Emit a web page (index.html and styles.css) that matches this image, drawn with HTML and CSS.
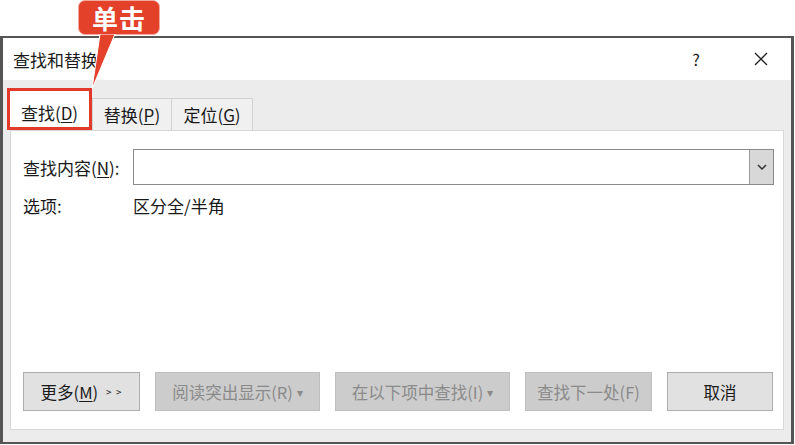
FILE: index.html
```html
<!DOCTYPE html>
<html lang="zh-CN">

<head>
    <meta charset="UTF-8">
    <title>查找和替换</title>
    <link rel="stylesheet" href="styles.css">
</head>

<body>
    <div class="dialog">
        <div class="titlebar">
            <span class="title">查找和替换</span>
            <span class="help">?</span>
            <span class="close">
                <svg width="16" height="16" viewBox="0 0 16 16">
                    <path d="M2 2 L14 14 M14 2 L2 14" stroke="#222" stroke-width="1.3" fill="none"/>
                </svg>
            </span>
        </div>

        <div class="body">
            <div class="tabs">
                <div class="tab active">查找(<u>D</u>)</div>
                <div class="tab">替换(<u>P</u>)</div>
                <div class="tab">定位(<u>G</u>)</div>
            </div>

            <div class="panel">
                <div class="row">
                    <label class="label">查找内容(<u>N</u>):</label>
                    <div class="combo">
                        <div class="combo-input"></div>
                        <div class="combo-btn">
                            <svg width="10" height="6" viewBox="0 0 10 6">
                                <path d="M1 1 L5 5 L9 1" stroke="#333" stroke-width="1.5" fill="none"/>
                            </svg>
                        </div>
                    </div>
                </div>

                <div class="row options">
                    <span class="label">选项:</span>
                    <span>区分全/半角</span>
                </div>

                <div class="buttons">
                    <div class="btn more">更多(<u>M</u>) <span class="arrows">&gt; &gt;</span></div>
                    <div class="btn disabled read">阅读突出显示(R) <span class="caret">▾</span></div>
                    <div class="btn disabled within">在以下项中查找(I) <span class="caret">▾</span></div>
                    <div class="btn disabled next">查找下一处(F)</div>
                    <div class="btn cancel">取消</div>
                </div>
            </div>
        </div>
    </div>

    <!-- annotation -->
    <div class="callout">单击</div>
    <svg class="pointer" width="40" height="70" viewBox="0 0 40 70">
        <path d="M20 0 L35 0 L12 55 Z" fill="#e4412b" stroke="#fff" stroke-width="1"/>
    </svg>
</body>

</html>
```

FILE: styles.css
```css
body {
    margin: 0;
    padding: 0;
    background-color: #fff;
    font-family: "Noto Sans CJK SC", "Liberation Sans", sans-serif;
    font-size: 17px;
    color: #1a1a1a;
    position: relative;
    width: 795px;
    height: 445px;
    overflow: hidden;
}

u {
    text-decoration: underline;
    text-underline-offset: 2px;
}

.dialog {
    margin: 36px 1px 0 0;
    height: 404px;
    border: 2px solid #555;
    border-left-width: 3px;
    border-right-width: 3px;
    display: flex;
    flex-direction: column;
}

.titlebar {
    height: 42px;
    background-color: #fff;
    display: flex;
    align-items: center;
    padding-left: 10px;
}

.title {
    flex: 1;
}

.help {
    width: 20px;
    text-align: center;
    font-size: 16px;
    margin-right: 45px;
}

.close {
    width: 20px;
    height: 16px;
    margin-right: 20px;
    display: flex;
    justify-content: center;
}

.body {
    flex: 1;
    background-color: #ececec;
    display: flex;
    flex-direction: column;
    padding: 0 7px 12px 5px;
}

.tabs {
    display: flex;
    align-items: flex-end;
    height: 50px;
}

.tab {
    height: 32px;
    box-sizing: border-box;
    border: 1px solid #d2d2d2;
    border-bottom: none;
    background-color: #f0f0f0;
    display: flex;
    align-items: center;
    justify-content: center;
    margin-left: -1px;
}

.tab:nth-child(2) {
    width: 80px;
    margin-left: 0;
}

.tab:nth-child(3) {
    width: 82px;
}

.tab.active {
    width: 85px;
    height: 42px;
    background-color: #fff;
    border: 3px solid #e2392a;
    position: relative;
    z-index: 1;
    padding-top: 6px;
}

.panel {
    flex: 1;
    margin-left: 2px;
    background-color: #fff;
    border: 1px solid #d6d6d6;
    display: flex;
    flex-direction: column;
    padding: 0 9px 18px 12px;
}

.row {
    display: flex;
    align-items: center;
}

.row:first-child {
    margin-top: 18px;
    height: 36px;
}

.label {
    width: 110px;
}

.options {
    margin-top: 10px;
    height: 20px;
}

.combo {
    flex: 1;
    height: 36px;
    box-sizing: border-box;
    border: 1px solid #8a8a8a;
    display: flex;
}

.combo-input {
    flex: 1;
}

.combo-btn {
    width: 23px;
    background-color: #d8d8d8;
    border-left: 1px solid #9a9a9a;
    display: flex;
    align-items: center;
    justify-content: center;
}

.buttons {
    margin-top: auto;
    display: flex;
    gap: 15px;
}

.btn {
    height: 39px;
    box-sizing: border-box;
    border: 1px solid #adadad;
    background-color: #e1e1e1;
    display: flex;
    align-items: center;
    justify-content: center;
    font-size: 16.5px;
}

.btn.disabled {
    background-color: #cccccc;
    border-color: #bfbfbf;
    color: #8a8a8a;
}

.more { width: 117px; }
.read { width: 165px; }
.within { width: 175px; }
.next { width: 127px; }
.cancel { width: 106px; }

.arrows {
    font-size: 10px;
    margin-left: 8px;
    letter-spacing: 1px;
}

.caret {
    font-size: 12px;
    margin-left: 4px;
}

.callout {
    position: absolute;
    left: 78px;
    top: 0;
    width: 82px;
    height: 35px;
    background-color: #e4412b;
    border: 1px solid #f2a89c;
    border-radius: 7px;
    box-sizing: border-box;
    color: #fff;
    font-size: 26px;
    line-height: 1;
    font-weight: bold;
    display: flex;
    align-items: center;
    justify-content: center;
    letter-spacing: 1px;
}

.pointer {
    position: absolute;
    left: 80px;
    top: 34px;
}
```
